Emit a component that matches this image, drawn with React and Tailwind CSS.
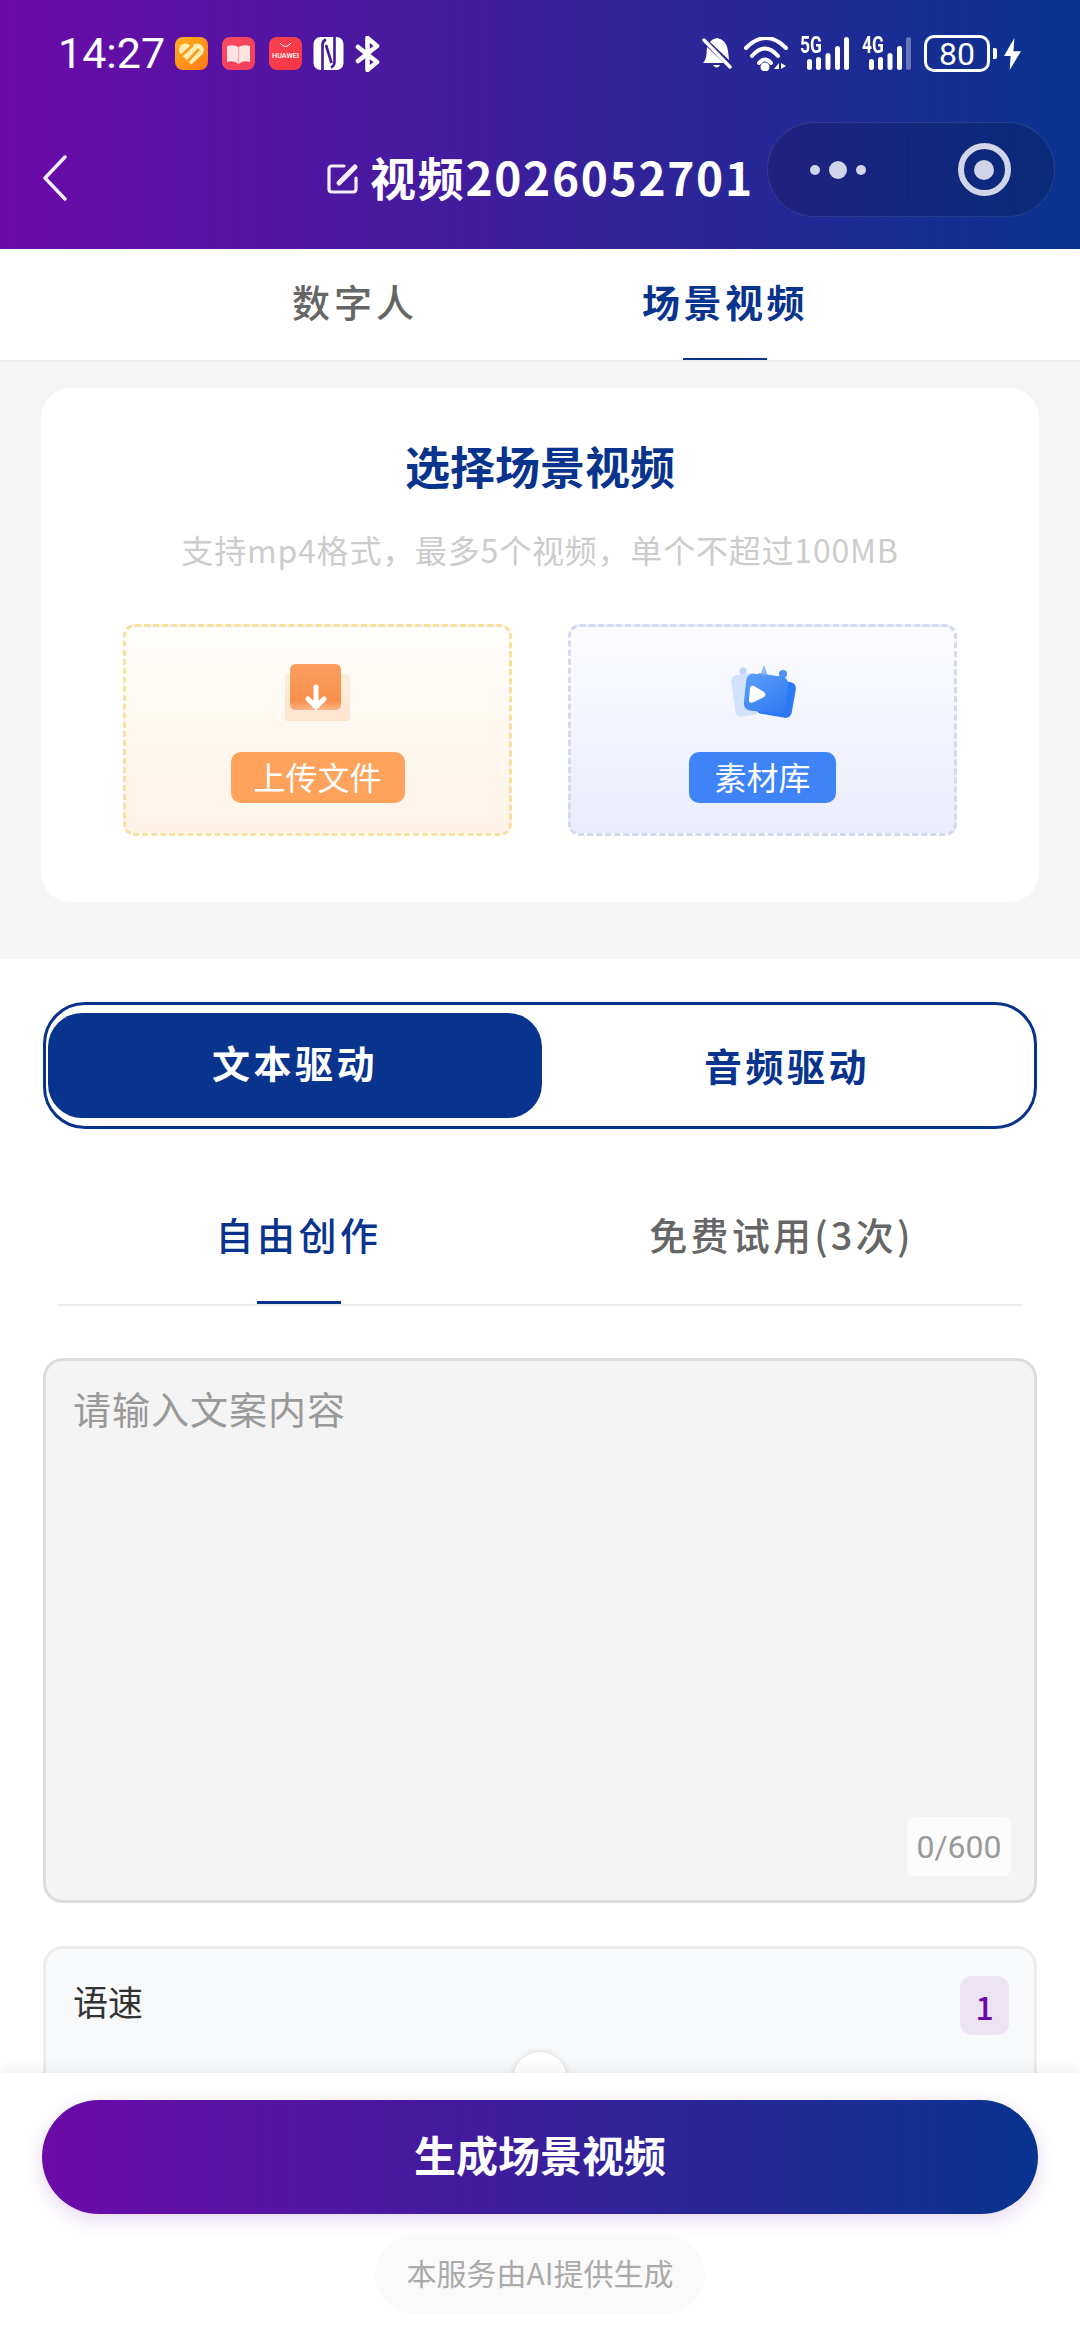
function Tile({ from, to, children, className = "" }) {
  return (
    <div className={`h-[33px] w-[33px] rounded-[8px] overflow-hidden ${className}`} style={{ background: `linear-gradient(135deg, ${from}, ${to})` }}>
      <svg width="33" height="33" viewBox="0 0 33 33">{children}</svg>
    </div>
  );
}

function Signal({ label, faded, className = "" }) {
  const bars = [[9.5, 22], [18.5, 20], [28, 16], [37.5, 9], [46.5, 0]];
  return (
    <div className={`relative h-[34px] w-[50px] ${className}`}>
      <svg width="50" height="34" viewBox="0 0 50 34">
        {bars.map(([x, y], i) => (
          <rect key={i} x={x - 2.5} y={y} width="5" height={33 - y} rx="2.5" fill="#fff" opacity={faded && i === 4 ? 0.35 : 1} />
        ))}
      </svg>
      <span className="absolute left-0 top-[-1px] text-[23px] leading-[19px] font-bold font-[Roboto] text-white origin-left scale-x-[0.76]">{label}</span>
    </div>
  );
}

function StatusBar() {
  return (
    <div className="flex items-center pl-[58px] pr-[59px] pt-[36px] h-[71px] text-white">
      <span className="text-[43px] leading-[35px] font-[Roboto] tracking-[0px] w-[117px]">14:27</span>
      <Tile from="#ffb020" to="#ff7a10">
        <path d="M16.5 27.5 L5 16.5 Q2 10 8 7 Q13 5.5 16 9.5 Q20 5 25 7 Q31 11 27.5 17 Z" fill="#ffeeb4" />
        <path d="M6 19 L18 8 M12 25 L24 12" stroke="#fb9a1a" strokeWidth="2.6" />
      </Tile>
      <Tile from="#fb4a60" to="#f23d58" className="ml-[14px]">
        <path d="M5 9 Q12 7 16.5 10 Q21 7 28 9 V25 Q21 23 16.5 27 Q12 23 5 25 Z" fill="#ffe3e3" />
        <path d="M16.5 10 V27" stroke="#f9a8ae" strokeWidth="1.2" />
      </Tile>
      <Tile from="#fb4450" to="#f43445" className="ml-[14px]">
        <path d="M11 6 Q16.5 13 22 6" fill="none" stroke="#fff" strokeWidth="1" />
        <text x="16.5" y="21" textAnchor="middle" fontSize="7" fontWeight="500" fill="#fff" fontFamily="Roboto, sans-serif" textLength="27" lengthAdjust="spacingAndGlyphs">HUAWEI</text>
      </Tile>
      <svg width="31" height="33" viewBox="0 0 31 33" className="ml-[11px]">
        <rect x="0.5" y="0" width="30" height="33" rx="7" fill="#fff" />
        <path d="M9.5 33 V8 Q9.5 4 13 2.5 M21.5 0 V25 Q21.5 29 18 30.5 M13 8 L18.5 26" fill="none" stroke="#43199c" strokeWidth="2.6" />
      </svg>
      <svg width="25" height="36" viewBox="0 0 25 36" className="ml-[11px]">
        <path d="M3 11 L22 26 L12.5 34 V2 L22 10 L3 25" fill="none" stroke="#fff" strokeWidth="4.6" strokeLinejoin="round" strokeLinecap="round" />
      </svg>
      <div className="flex-1" />
      <svg width="31" height="34" viewBox="0 0 31 34">
        <path d="M15 1 Q25 3 26 14 L27 23 L8 5 Q10 2 15 1 Z M5 10 L22 26 H1 Q4 23 4.5 17 Z M11 28 H18 Q15 33 11 28 Z" fill="#fff" />
        <path d="M2 3 L28 30" stroke="#fff" strokeWidth="3.4" strokeLinecap="round" />
      </svg>
      <svg width="44" height="34" viewBox="0 0 44 34" className="ml-[11px]">
        <path d="M2 11 Q22 -9 42 11 M8 19 Q21 4 34 19 M15 26 Q21 19 27 26" fill="none" stroke="#fff" strokeWidth="4" strokeLinecap="round" />
        <circle cx="21" cy="30" r="4.5" fill="#fff" />
        <path d="M35 26 L30 32 H35 Z M37 26 V32 L42 29 Z" fill="#fff" />
      </svg>
      <Signal label="5G" className="ml-[12px]" />
      <Signal label="4G" faded className="ml-[12px]" />
      <div className="ml-[12px] h-[37px] w-[66px] rounded-[10px] border-[3px] border-white flex items-center justify-center text-[32px] leading-none font-[Roboto]">80</div>
      <div className="ml-[3px] h-[11px] w-[4px] rounded-r-[2px] bg-white" />
      <svg width="17" height="34" viewBox="0 0 18 34" className="ml-[7px]">
        <path d="M11 0 L0 19 H7 L6 34 L18 14 H10 Z" fill="#fff" />
      </svg>
    </div>
  );
}

function NavBar() {
  return (
    <div className="flex items-center pl-[43px] pr-[25px] pt-[51px] text-white">
      <svg width="24" height="46" viewBox="0 0 24 46" className="mt-[16px] shrink-0">
        <path d="M22 2 L2 23 L22 44" fill="none" stroke="#f5f0fc" strokeWidth="3.4" strokeLinecap="round" strokeLinejoin="round" />
      </svg>
      <div className="ml-[260px] mt-[16px] flex items-center">
        <svg width="32" height="34" viewBox="0 0 32 34" className="shrink-0">
          <path d="M17 5 H5 Q2 5 2 8 V28 Q2 31 5 31 H26 Q29 31 29 28 V17" fill="none" stroke="#f3eefc" strokeWidth="3.2" strokeLinecap="round" />
          <path d="M12 22 L28 6" stroke="#f3eefc" strokeWidth="5" strokeLinecap="round" />
        </svg>
        <span className="ml-[11px] text-[46px] leading-[60px] font-bold tracking-[1.7px] whitespace-nowrap pb-[4px]">视频2026052701</span>
      </div>
      <div className="ml-auto w-[288px] h-[95px] shrink-0 rounded-full bg-black/15 border border-white/10 flex items-center">
        <div className="flex-1 flex items-center justify-center gap-[9px]">
          <span className="h-[10px] w-[10px] rounded-full bg-[#d2d4ea]" />
          <span className="h-[18px] w-[18px] rounded-full bg-[#d2d4ea]" />
          <span className="h-[10px] w-[10px] rounded-full bg-[#d2d4ea]" />
        </div>
        <div className="h-[63px] w-[1px] bg-black/10" />
        <div className="flex-1 flex items-center justify-center pl-[6px]">
          <div className="h-[53px] w-[53px] rounded-full border-[6px] border-[#d2d4ea] flex items-center justify-center">
            <span className="h-[20px] w-[20px] rounded-full bg-[#d2d4ea]" />
          </div>
        </div>
      </div>
    </div>
  );
}

function UploadIcon() {
  return (
    <svg width="65" height="57" viewBox="0 0 65 57" className="blur-[0.6px]">
      <defs>
        <linearGradient id="ug" x1="0" y1="0" x2="0" y2="1">
          <stop offset="0" stopColor="#fb9f62" />
          <stop offset="0.8" stopColor="#f98f4c" />
          <stop offset="1" stopColor="#fbb488" />
        </linearGradient>
        <linearGradient id="ut" x1="0" y1="0" x2="0" y2="1">
          <stop offset="0" stopColor="#fdeede" />
          <stop offset="1" stopColor="#fde4cd" />
        </linearGradient>
      </defs>
      <rect x="0" y="10" width="65" height="47" rx="3" fill="url(#ut)" />
      <path d="M5 6 Q5 0 11 0 H50 Q56 0 56 6 V40 Q56 46 50 46 H11 Q5 46 5 40 Z" fill="url(#ug)" />
      <path d="M31 23 V42 M23 35 L31 43 L39 35" fill="none" stroke="#fff" strokeWidth="5" strokeLinecap="round" strokeLinejoin="round" />
    </svg>
  );
}

function LibraryIcon() {
  return (
    <svg width="66" height="56" viewBox="0 0 66 56" className="blur-[0.7px]">
      <defs>
        <linearGradient id="lg" x1="0" y1="0" x2="1" y2="1">
          <stop offset="0" stopColor="#5c9ff9" />
          <stop offset="1" stopColor="#2f78f3" />
        </linearGradient>
      </defs>
      <rect x="3" y="10" width="24" height="42" rx="6" transform="rotate(-8 15 30)" fill="#d3e2fb" />
      <circle cx="13" cy="7" r="3.5" fill="#bcd3fa" />
      <rect x="28" y="16" width="36" height="36" rx="6" transform="rotate(10 46 34)" fill="#2c78f5" />
      <circle cx="53" cy="10" r="4" fill="#4d8ff5" />
      <path d="M30 12 L34 1 L38 12 Z" fill="#8fb7f9" />
      <path d="M22 12 L30 9 L46 12 Z" fill="#7dabf8" />
      <rect x="15" y="11" width="42" height="37" rx="7" transform="rotate(6 36 29)" fill="url(#lg)" />
      <path d="M20 25 Q20 21 24 22 L34 28 Q37 31 34 33 L24 38 Q19 40 19 36 Z" fill="#fff" />
    </svg>
  );
}

function SourceBox({ border, gradient, badge, badgeClass, children }) {
  return (
    <div className={`w-[389px] h-[212px] rounded-[12px] border-[3px] border-dashed flex flex-col items-center pt-[36px] ${border} ${gradient}`}>
      <div className="h-[58px] flex items-center">{children}</div>
      <div className={`mt-[31px] h-[51px] rounded-[10px] flex items-center justify-center text-white text-[32px] leading-none pb-[3px] ${badgeClass}`}>{badge}</div>
    </div>
  );
}

function PickCard() {
  return (
    <div className="bg-[#f5f5f5] pt-[26px] pb-[57px] px-[41px]">
      <div className="bg-white rounded-[30px] px-[82px] pt-[48px] pb-[66px]">
        <div className="text-center text-[45px] leading-[60px] font-bold text-[#08348e]">选择场景视频</div>
        <div className="mt-[33px] text-center text-[32px] leading-[40px] text-[#cccccc] whitespace-nowrap tracking-[0.8px]">支持mp4格式，最多5个视频，单个不超过100MB</div>
        <div className="mt-[55px] flex justify-between">
          <SourceBox border="border-[#f9e0a0]" gradient="bg-linear-to-b/srgb from-[#fffdfb] to-[#fff3e6]" badge="上传文件" badgeClass="w-[174px] bg-[#fea25c]">
            <UploadIcon />
          </SourceBox>
          <SourceBox border="border-[#d6d9f2]" gradient="bg-linear-to-b/srgb from-[#fbfbff] to-[#ebedfe]" badge="素材库" badgeClass="w-[147px] bg-[#3f83f8]">
            <LibraryIcon />
          </SourceBox>
        </div>
      </div>
    </div>
  );
}

export default function App() {
  return (
    <div className="relative h-[2340px] w-[1080px] overflow-hidden bg-white" style={{ fontFamily: '"Noto Sans CJK SC", "Noto Sans", sans-serif' }}>
      <header className="h-[249px] bg-linear-to-r/srgb from-[#6c0aa8] to-[#08348f]">
        <StatusBar />
        <NavBar />
      </header>

      <div className="h-[113px] flex pl-[292px] gap-[224px] border-b-2 border-[#ededed]">
        <div className="flex flex-col items-center pt-[27px]">
          <span className="text-[38px] leading-[50px] font-medium tracking-[4px] text-[#666666]">数字人</span>
        </div>
        <div className="flex flex-col items-center pt-[27px]">
          <span className="text-[38px] leading-[50px] font-bold tracking-[3.5px] text-[#08348e]">场景视频</span>
          <span className="mt-[32px] h-[3px] w-[84px] bg-[#08348e]" />
        </div>
      </div>

      <PickCard />

      <div className="mt-[43px] mx-[43px] h-[127px] rounded-[42px] border-[3px] border-[#08348e] p-[2px] pt-[8px] flex">
        <div className="w-[494px] h-[105px] rounded-[34px] bg-[#08348e] flex items-center justify-center text-white text-[38px] leading-none font-bold tracking-[3.5px] pb-[7px]">文本驱动</div>
        <div className="flex-1 h-[105px] flex items-center justify-center text-[#08348e] text-[38px] leading-none font-bold tracking-[3.5px] pb-[2px]">音频驱动</div>
      </div>

      <div className="mt-[80px] mx-[57px] flex border-b-2 border-[#ebebef]">
        <div className="flex-1 flex flex-col items-center">
          <span className="text-[38px] leading-[50px] font-medium tracking-[3.5px] text-[#08348e]">自由创作</span>
          <span className="mt-[42px] h-[3px] w-[84px] bg-[#08348e]" />
        </div>
        <div className="flex-1 flex flex-col items-center">
          <span className="text-[38px] leading-[50px] font-medium tracking-[3.2px] text-[#666666] whitespace-nowrap">免费试用(3次)</span>
        </div>
      </div>

      <div className="mt-[52px] mx-[43px] h-[545px] rounded-[20px] border-[3px] border-[#dddddd] bg-[#f4f4f4] flex flex-col pl-[27px] pr-[23px] pt-[25px] pb-[24px]">
        <div className="text-[38px] leading-[44px] tracking-[1px] text-[#999999]">请输入文案内容</div>
        <div className="mt-auto self-end w-[104px] h-[59px] rounded-[8px] bg-[#fcfcfc] flex items-center justify-center text-[32px] leading-none text-[#999999] font-[Roboto]">0/600</div>
      </div>

      <div className="mt-[43px] mx-[43px] h-[260px] rounded-[20px] border-[3px] border-[#ececec] bg-[#f8f9fb] pl-[27px] pr-[25px] pt-[27px]">
        <div className="flex items-center justify-between">
          <span className="text-[35px] leading-[44px] pb-[10px] text-[#333333]">语速</span>
          <span className="w-[49px] h-[59px] rounded-[12px] bg-[#ece4f3] flex items-center justify-center text-[32px] leading-none font-medium text-[#6c0aa8]">1</span>
        </div>
        <div className="mt-[17px] flex justify-center pr-[2px]">
          <span className="h-[54px] w-[54px] rounded-full bg-white shadow-[0_0_6px_rgba(0,0,0,0.15)]" />
        </div>
      </div>

      <div className="absolute left-0 right-0 bottom-0 h-[267px] bg-white shadow-[0_-4px_14px_rgba(0,0,0,0.06)] pt-[27px] flex flex-col items-center">
        <div className="w-[996px] h-[114px] rounded-full bg-linear-to-r/srgb from-[#6c0aa8] to-[#08348f] shadow-[0_6px_20px_rgba(108,10,168,0.16)] flex items-center justify-center text-white text-[42px] leading-none font-bold pb-[7px]">生成场景视频</div>
        <div className="mt-[21px] w-[330px] h-[79px] rounded-full bg-[#fafafa] flex items-center justify-center text-[30px] leading-none text-[#aaaaaa] whitespace-nowrap pb-[6px]">本服务由AI提供生成</div>
      </div>
    </div>
  );
}
